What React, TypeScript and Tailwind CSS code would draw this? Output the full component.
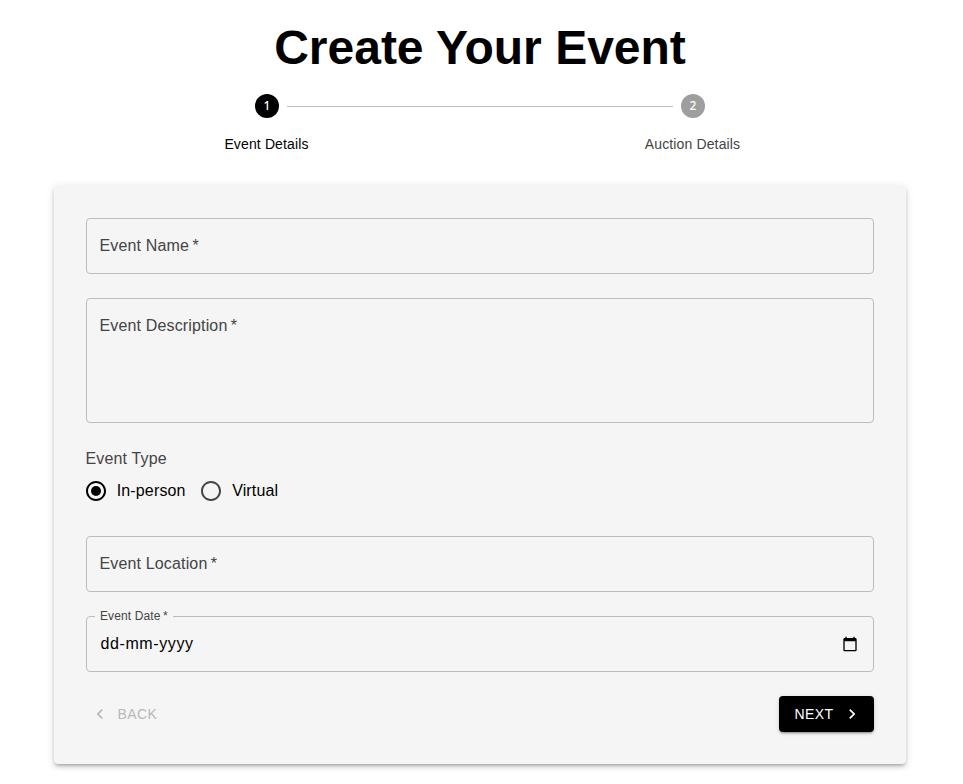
import React, { useState } from "react";

type FieldProps = { label: string; multiline?: boolean };

function Field({ label, multiline = false }: FieldProps) {
  return (
    <div
      className={
        "rounded-[4px] border border-[#bcbcbc] pl-[12.5px] pt-[15px] text-base leading-[23px] tracking-[0.15px] text-[#444] " +
        (multiline ? "h-[125px]" : "h-14")
      }
    >
      {label}
      <span>&thinsp;*</span>
    </div>
  );
}

type StepProps = { n: number; label: string; active?: boolean };

function Step({ n, label, active = false }: StepProps) {
  return (
    <div className="flex flex-1 flex-col items-center">
      <svg className="size-6" viewBox="0 0 24 24">
        <circle cx="12" cy="12" r="12" fill={active ? "#000" : "#9e9e9e"} />
        <text
          x="12"
          y="16"
          textAnchor="middle"
          fill="#fff"
          className="font-['Noto_Sans',sans-serif] text-xs font-medium"
        >
          {n}
        </text>
      </svg>
      <span className={"mt-4 mr-px text-sm leading-5 tracking-[0.13px] " + (active ? "text-black" : "text-[#444]")}>
        {label}
      </span>
    </div>
  );
}

type RadioProps = { label: string; checked: boolean; onSelect: () => void };

function Radio({ label, checked, onSelect }: RadioProps) {
  return (
    <button type="button" role="radio" aria-checked={checked} onClick={onSelect} className="flex items-center gap-[8.7px]">
      <svg className="-ml-0.5 size-6" viewBox="0 0 24 24" fill={checked ? "#000" : "#444"}>
        <path d="M12 2C6.48 2 2 6.48 2 12s4.48 10 10 10 10-4.48 10-10S17.52 2 12 2zm0 18c-4.42 0-8-3.58-8-8s3.58-8 8-8 8 3.58 8 8-3.58 8-8 8z" />
        {checked && <circle cx="12" cy="12" r="5" />}
      </svg>
      <span className="text-base leading-6 tracking-[0.15px] text-black">{label}</span>
    </button>
  );
}

export default function App() {
  const [kind, setKind] = useState("In-person");
  return (
    <main className="flex h-[784px] w-[963px] flex-col bg-white pl-[54px] font-['Liberation_Sans',Arial,sans-serif]">
      <div className="w-[852px]">
        <h1 className="pt-5 text-center text-5xl leading-[56px] font-bold text-black">Create Your Event</h1>
        <div className="relative mt-[18px] flex">
          <Step n={1} label="Event Details" active />
          <div className="absolute top-3 left-[233px] h-px w-[386px] bg-[#bdbdbd]" />
          <Step n={2} label="Auction Details" />
        </div>
        <form className="mt-8 h-[578px] rounded-[4px] bg-[#f5f5f5] p-8 shadow-[0px_3px_3px_-2px_rgba(0,0,0,0.2),0px_3px_4px_0px_rgba(0,0,0,0.14),0px_1px_8px_0px_rgba(0,0,0,0.12)]">
          <Field label="Event Name" />
          <div className="mt-6">
            <Field label="Event Description" multiline />
          </div>
          <div className="mt-6 -ml-[0.5px] text-base leading-[23px] tracking-[0.15px] text-[#444]">Event Type</div>
          <div className="mt-[9px] flex h-6 items-center gap-[15.8px]" role="radiogroup">
            <Radio label="In-person" checked={kind === "In-person"} onSelect={() => setKind("In-person")} />
            <Radio label="Virtual" checked={kind === "Virtual"} onSelect={() => setKind("Virtual")} />
          </div>
          <div className="mt-[33px]">
            <Field label="Event Location" />
          </div>
          <div className="relative mt-6 flex h-14 items-center justify-between rounded-[4px] border border-[#bcbcbc] px-[13px]">
            <span className="absolute -top-2 left-2 bg-[#f5f5f5] px-[5px] text-xs leading-[14px] tracking-[0.11px] text-[#444]">
              Event Date<span>&thinsp;*</span>
            </span>
            <span className="pl-[0.5px] text-base tracking-[0.6px] text-black">dd-mm-yyyy</span>
            <svg className="mr-[2px] mb-px size-4" viewBox="0 0 24 24" fill="#000">
              <path d="M20 3h-1V1h-2v2H7V1H5v2H4c-1.1 0-2 .9-2 2v16c0 1.1.9 2 2 2h16c1.1 0 2-.9 2-2V5c0-1.1-.9-2-2-2zm0 18H4V8h16v13z" />
            </svg>
          </div>
          <div className="mt-6 flex items-center justify-between">
            <button
              type="button"
              disabled
              className="flex h-9 items-center pl-1 text-sm leading-6 tracking-[0.4px] text-[#b8b8b8]"
            >
              <svg className="mr-[7.5px] size-5" viewBox="0 0 24 24" fill="currentColor">
                <path d="M15.41 7.41 14 6l-6 6 6 6 1.41-1.41L10.83 12z" />
              </svg>
              BACK
            </button>
            <button
              type="button"
              className="flex h-9 w-[95px] items-center rounded-[4px] bg-black pl-[15.5px] text-sm leading-6 tracking-[0.4px] text-white shadow-[0px_3px_1px_-2px_rgba(0,0,0,0.2),0px_2px_2px_0px_rgba(0,0,0,0.14),0px_1px_5px_0px_rgba(0,0,0,0.12)]"
            >
              NEXT
              <svg className="ml-[8.5px] size-5" viewBox="0 0 24 24" fill="currentColor">
                <path d="M10 6 8.59 7.41 13.17 12l-4.58 4.59L10 18l6-6z" />
              </svg>
            </button>
          </div>
        </form>
      </div>
    </main>
  );
}
